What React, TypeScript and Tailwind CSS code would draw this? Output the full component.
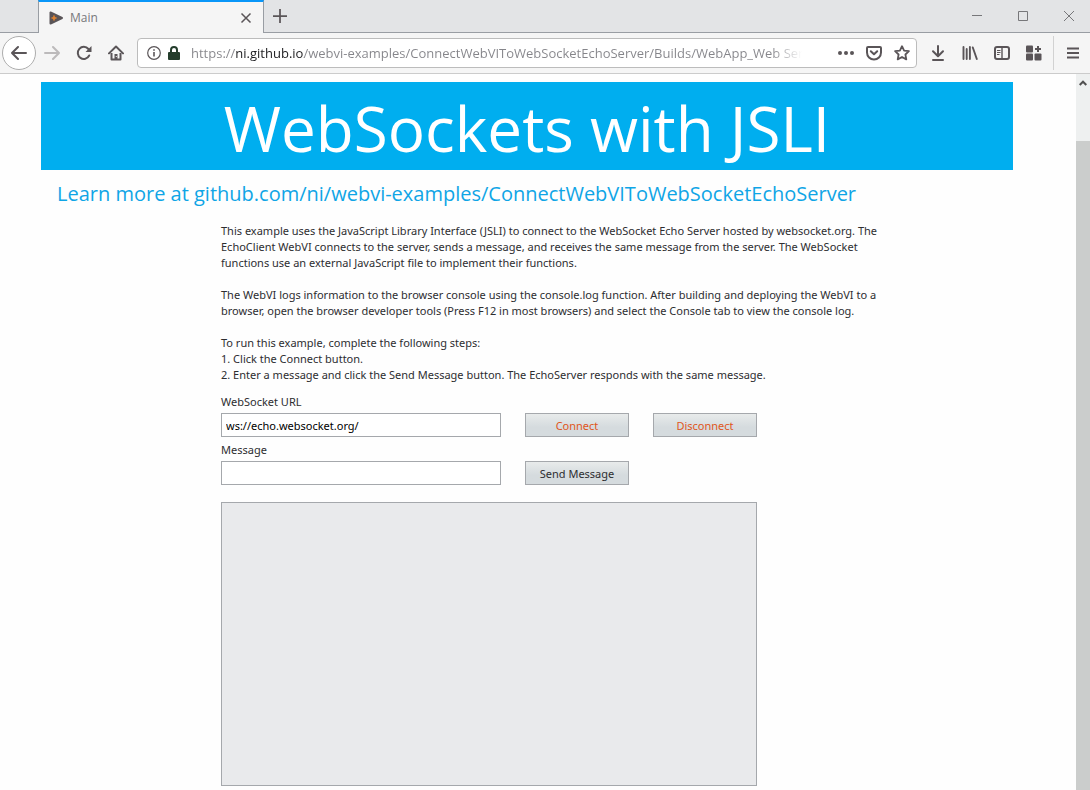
import type { ReactNode } from "react";

const GLYPH = "#5a5558";

function Icon({ children, size = 16 }: { children: ReactNode; size?: number }) {
  return (
    <svg width={size} height={size} viewBox="0 0 16 16" fill="none" stroke={GLYPH} strokeWidth="2" aria-hidden="true">
      {children}
    </svg>
  );
}

function IconButton({ label, className = "size-8", children }: { label: string; className?: string; children: ReactNode }) {
  return (
    <button type="button" aria-label={label} className={`flex shrink-0 items-center justify-center ${className}`}>
      {children}
    </button>
  );
}

function TabStrip() {
  return (
    <div className="flex h-[33px] bg-[#e3e4e6]">
      <div className="w-[38px] border-b border-[#999da3]" />
      <div className="flex w-[226px] items-center border-x border-t-2 border-x-[#999da3] border-t-[#0996f8] bg-[#f5f5f5] pl-2.5 pr-[7px]">
        <svg width="15" height="14" viewBox="0 0 15 14" aria-hidden="true">
          <path d="M1.5 1.5v11L13 7z" fill="#5a5558" stroke="#5a5558" strokeWidth="2" strokeLinejoin="round" />
          <path d="M5 4.5v5M2.5 7h5" stroke="#e8862e" strokeWidth="1.6" />
        </svg>
        <span className="grow pl-1.5 text-[12px] text-[#77787b]">Main</span>
        <IconButton label="Close tab" className="size-5">
          <Icon size={12}>
            <path d="M2 2l12 12M14 2L2 14" />
          </Icon>
        </IconButton>
      </div>
      <div className="flex grow justify-between border-b border-[#999da3]">
        <IconButton label="New tab">
          <Icon size={14}>
            <path d="M8 0v16M0 8h16" />
          </Icon>
        </IconButton>
        <div className="flex">
          <IconButton label="Minimize" className="w-[46px]">
            <svg width="10" height="10" stroke="#77777a" aria-hidden="true"><path d="M0 4.5h10" /></svg>
          </IconButton>
          <IconButton label="Maximize" className="w-[46px]">
            <svg width="10" height="10" stroke="#77777a" fill="none" aria-hidden="true"><path d="M.5.5h9v9h-9z" /></svg>
          </IconButton>
          <IconButton label="Close window" className="w-[42px] ml-[2px]">
            <svg width="10" height="10" stroke="#77777a" aria-hidden="true"><path d="M0 0l10 10M10 0L0 10" /></svg>
          </IconButton>
        </div>
      </div>
    </div>
  );
}

function AddressBar() {
  return (
    <div className="flex h-[30px] min-w-0 grow items-center rounded-sm border border-[#bcbcbc] bg-white pl-[9px]">
      <svg width="14" height="14" viewBox="0 0 14 14" fill="none" stroke="#5a5558" aria-hidden="true">
        <circle cx="7" cy="7" r="6.3" strokeWidth="1.2" />
        <path d="M7 6v4.5" strokeWidth="1.6" />
        <path d="M7 3.2v1.6" strokeWidth="1.6" />
      </svg>
      <svg className="ml-[7px]" width="12" height="14" viewBox="0 0 12 14" aria-hidden="true">
        <path d="M3 7V4a3 3 0 0 1 6 0v3" fill="none" stroke="#243d2c" strokeWidth="2" />
        <rect y="6" width="12" height="8" rx="1" fill="#243d2c" />
      </svg>
      <input
        aria-label="Address"
        readOnly
        value="https://ni.github.io/webvi-examples/ConnectWebVIToWebSocketEchoServer/Builds/WebApp_Web Server/Main.html"
        className="ml-[11px] min-w-0 grow bg-[linear-gradient(90deg,#85858a_45px,#1c1c1f_45px,#1c1c1f_113px,#85858a_113px,#85858a_580px,transparent_611px)] bg-clip-text pt-0.5 text-[13px] text-transparent outline-none"
      />
      <div className="flex pl-4">
        <IconButton label="Page actions" className="h-7 w-7">
          <svg width="16" height="4" fill="#5a5558" aria-hidden="true">
            <circle cx="2" cy="2" r="2" /><circle cx="8" cy="2" r="2" /><circle cx="14" cy="2" r="2" />
          </svg>
        </IconButton>
        <IconButton label="Save to Pocket" className="h-7 w-7">
          <Icon>
            <path d="M2 2h12a1 1 0 0 1 1 1v4.5a7 7 0 0 1-14 0V3a1 1 0 0 1 1-1z" />
            <path d="M4.8 6.2L8 9.2l3.2-3" strokeLinecap="round" strokeLinejoin="round" />
          </Icon>
        </IconButton>
        <IconButton label="Bookmark this page" className="h-7 w-7">
          <Icon>
            <path d="M8 1.2l2.1 4.4 4.8.6-3.5 3.3.9 4.9L8 12l-4.3 2.4.9-4.9L1.1 6.2l4.8-.6z" strokeLinejoin="round" strokeWidth="1.8" />
          </Icon>
        </IconButton>
      </div>
    </div>
  );
}

function Toolbar() {
  return (
    <div className="flex h-[41px] items-center border-b border-[#cbcbcb] bg-[#f5f5f5] pr-px pl-[2px]">
      <IconButton label="Back" className="size-[34px] rounded-full border border-[#adadad] bg-white">
        <Icon>
          <path d="M7 2L1 8l6 6M1 8h14" strokeLinecap="round" strokeLinejoin="round" />
        </Icon>
      </IconButton>
      <button type="button" aria-label="Forward" disabled className="flex size-8 items-center justify-center">
        <svg width="16" height="16" viewBox="0 0 16 16" fill="none" stroke="#bcbabb" strokeWidth="2" aria-hidden="true">
          <path d="M9 2l6 6-6 6M15 8H1" strokeLinecap="round" strokeLinejoin="round" />
        </svg>
      </button>
      <IconButton label="Reload">
        <Icon>
          <path d="M13.2 10.5A6 6 0 1 1 12.4 4" strokeLinecap="round" />
          <path d="M15.5 1v6H9.5z" fill={GLYPH} stroke="none" />
        </Icon>
      </IconButton>
      <IconButton label="Home">
        <Icon>
          <path d="M1 8.4L8 1.5l7 6.9" strokeLinecap="round" strokeLinejoin="round" />
          <path d="M3.5 8v6.5h9V8" strokeLinejoin="round" />
          <path d="M8 9v5" strokeWidth="3" />
          <path d="M8.3 11v1" stroke="#f5f5f5" strokeWidth="1" />
        </Icon>
      </IconButton>
      <div className="flex min-w-0 grow pl-[5px] pr-[5px]">
        <AddressBar />
      </div>
      <IconButton label="Downloads">
        <Icon>
          <path d="M8 1v10M3 6.3L8 11.3l5-5" strokeLinecap="round" strokeLinejoin="round" />
          <path d="M3 15h10" strokeLinecap="round" />
        </Icon>
      </IconButton>
      <IconButton label="Library">
        <Icon>
          <path d="M1.5 2v12M4.7 4v10M7.9 2v12" strokeWidth="1.9" strokeLinecap="round" />
          <path d="M10.8 2.5l4 11.5" strokeWidth="1.9" strokeLinecap="round" />
        </Icon>
      </IconButton>
      <IconButton label="Sidebars">
        <Icon>
          <rect x="1" y="2" width="14" height="12" rx="2" />
          <path d="M8 2v12" strokeWidth="1.4" />
          <path d="M3 5.5h3.5M3 7.5h3.5M3 9.5h2.5" strokeWidth="1" />
        </Icon>
      </IconButton>
      <IconButton label="Extensions">
        <Icon>
          <g fill={GLYPH} stroke="none">
            <rect x="0" y="0.5" width="7" height="7" rx="1" />
            <rect x="0" y="8.5" width="7" height="7" rx="1" />
            <rect x="8.5" y="8.5" width="7" height="7" rx="1" />
          </g>
          <path d="M12 1v6M9 4h6" />
        </Icon>
      </IconButton>
      <div className="ml-[3px] h-[34px] w-px bg-[#d2d2d2]" />
      <IconButton label="Open menu" className="ml-[3px] size-8">
        <Icon size={12}>
          <path d="M0 2h16M0 8h16M0 14h16" strokeWidth="2.6" />
        </Icon>
      </IconButton>
    </div>
  );
}

const field = "h-6 w-[280px] border border-[#a5a8ac] bg-white px-1 text-[11px] text-black outline-none";
const action = "h-6 w-[104px] border border-[#a5a8ac] bg-linear-to-b from-[#e8ebeb] to-[#d5dbde] to-60% pt-0.5 text-[11px]";

function EchoPage() {
  return (
    <main className="min-w-0 grow bg-[#fefefe] pt-2 pr-[63px] pl-[41px] font-['Noto_Sans','Open_Sans',sans-serif] text-[11px] leading-4 text-[#2d2d30]">
      <h1 className="flex h-[88px] items-center justify-center bg-[#00aeef] pt-1 font-['Open_Sans','Noto_Sans',sans-serif] text-[62px] leading-none text-white">
        WebSockets with JSLI
      </h1>
      <a href="https://github.com/ni/webvi-examples" className="block pt-2.5 pl-4 font-['Open_Sans','Noto_Sans',sans-serif] text-[20px] leading-7 whitespace-nowrap text-[#0fa5e6]">
        Learn more at github.com/ni/webvi-examples/ConnectWebVIToWebSocketEchoServer
      </a>
      <div className="pt-[15px] pl-[180px]">
        <div className="flex flex-col gap-4 whitespace-nowrap">
          <p>
            This example uses the JavaScript Library Interface (JSLI) to connect to the WebSocket Echo Server hosted by websocket.org. The
            <br />
            EchoClient WebVI connects to the server, sends a message, and receives the same message from the server. The WebSocket
            <br />
            functions use an external JavaScript file to implement their functions.
          </p>
          <p>
            The WebVI logs information to the browser console using the console.log function. After building and deploying the WebVI to a
            <br />
            browser, open the browser developer tools (Press F12 in most browsers) and select the Console tab to view the console log.
          </p>
          <p>
            To run this example, complete the following steps:
            <br />
            1. Click the Connect button.
            <br />
            2. Enter a message and click the Send Message button. The EchoServer responds with the same message.
          </p>
        </div>
        <form className="flex flex-col gap-[5px] pt-[11px]" onSubmit={(e) => e.preventDefault()}>
          <div className="flex items-end gap-6">
            <div className="flex flex-col gap-[3px]">
              <label htmlFor="socket-url">WebSocket URL</label>
              <input id="socket-url" className={field} defaultValue="ws://echo.websocket.org/" />
            </div>
            <button type="button" className={`${action} text-[#e0561b]`}>Connect</button>
            <button type="button" className={`${action} text-[#e0561b]`}>Disconnect</button>
          </div>
          <div className="flex items-end gap-6">
            <div className="flex flex-col gap-[3px]">
              <label htmlFor="message">Message</label>
              <input id="message" className={field} />
            </div>
            <button type="submit" className={action}>Send Message</button>
          </div>
        </form>
        <textarea aria-label="Messages" readOnly className="mt-[17px] block h-[284px] w-[536px] resize-none border border-[#a5a8ac] bg-[#e9eaec] outline-none" />
      </div>
    </main>
  );
}

export default function App() {
  return (
    <div className="flex h-screen flex-col overflow-hidden font-['Open_Sans','Noto_Sans',sans-serif]">
      <header className="shrink-0">
        <TabStrip />
        <Toolbar />
      </header>
      <div className="flex min-h-0 grow">
        <EchoPage />
        <div className="flex w-[14px] shrink-0 flex-col bg-[#eef0f0]">
          <div className="flex h-[67px] justify-center pt-[6px]">
            <svg width="8" height="6" fill="none" stroke="#505050" strokeWidth="2" aria-hidden="true">
              <path d="M.7 5L4 1.7 7.3 5" />
            </svg>
          </div>
          <div className="grow bg-[#cbcdcc]" />
        </div>
      </div>
    </div>
  );
}
